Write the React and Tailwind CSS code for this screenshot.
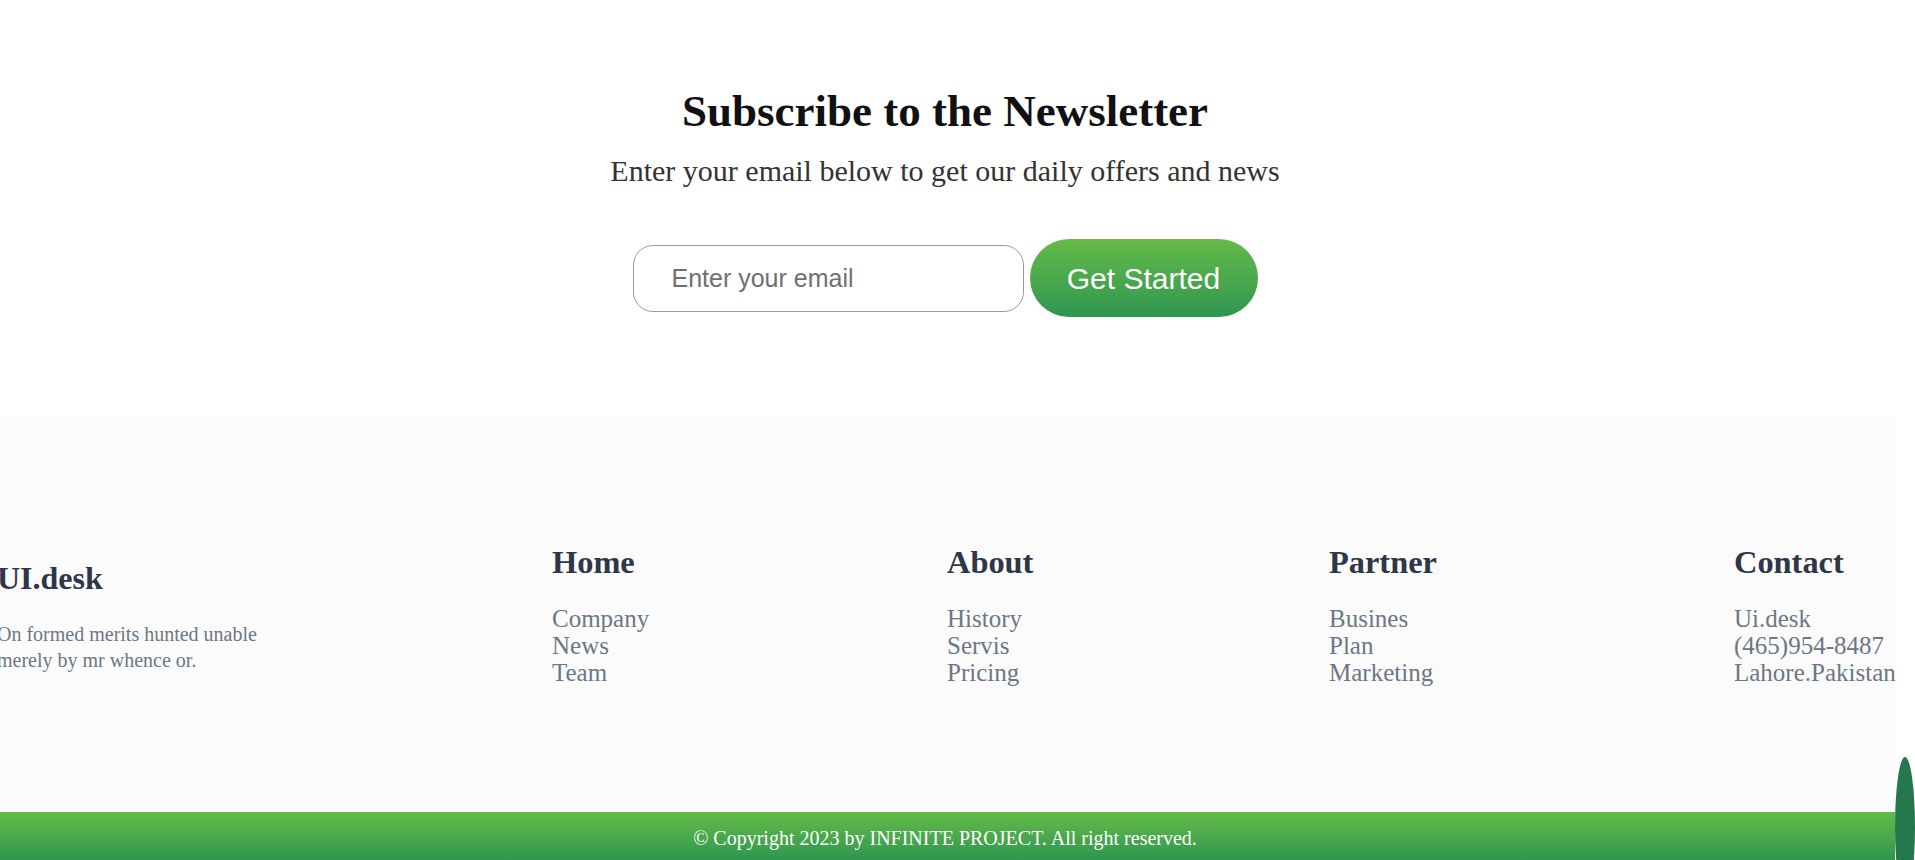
import React from 'react';

const COLUMNS = [
  { title: 'Home', links: ['Company', 'News', 'Team'], w: 'w-[395px]' },
  { title: 'About', links: ['History', 'Servis', 'Pricing'], w: 'w-[382px]' },
  { title: 'Partner', links: ['Busines', 'Plan', 'Marketing'], w: 'w-[405px]' },
  { title: 'Contact', links: ['Ui.desk', '(465)954-8487', 'Lahore.Pakistan'], w: 'w-[161px]' },
];

const serif = "font-['Liberation_Serif','Times_New_Roman',serif]";

const App = () => {
  return (
    <div className={`relative w-[1895px] bg-white ${serif}`}>
      {/* Newsletter */}
      <section className="h-[416px] flex flex-col items-center pt-[85px] pr-[5px]">
        <h2 className="text-[45px] leading-[52px] font-bold text-[#111]">Subscribe to the Newsletter</h2>
        <p className="mt-[16px] text-[30px] leading-[36px] text-[#333]">
          Enter your email below to get our daily offers and news
        </p>
        <form className="mt-[50px] flex items-center gap-[6px]" onSubmit={(e) => e.preventDefault()}>
          <input
            type="email"
            placeholder="Enter your email"
            className="w-[391px] h-[67px] rounded-[20px] border border-[#9a9a9a] pl-[38px] text-[25px] outline-none font-['Liberation_Sans',Arial,sans-serif] placeholder:text-[#6f6f6f]"
          />
          <button
            type="submit"
            className="w-[228px] h-[78px] rounded-full bg-gradient-to-b from-[#64bb47] to-[#2e9650] text-white text-[30px] font-['Liberation_Sans',Arial,sans-serif]"
          >
            Get Started
          </button>
        </form>
      </section>

      {/* Footer */}
      <footer className="bg-[#fbfbfb]">
        <div className="h-[396px] flex pt-[127px]">
          <div className="w-[552px] shrink-0 -ml-[3px] pt-[16px]">
            <h3 className="text-[32px] leading-[38px] font-bold text-[#2d3748]">UI.desk</h3>
            <p className="mt-[24px] w-[275px] text-[20px] leading-[26px] text-[#6b7785]">
              On formed merits hunted unable merely by mr whence or.
            </p>
          </div>
          <div className="w-[3px] shrink-0" />
          {COLUMNS.map((col) => (
            <div key={col.title} className={`${col.w} shrink-0`}>
              <h4 className="text-[32.4px] leading-[38px] font-bold text-[#2d3748]">{col.title}</h4>
              <ul className="mt-[24px] text-[25px] leading-[27px] text-[#6b7785] whitespace-nowrap">
                {col.links.map((l) => (
                  <li key={l}>{l}</li>
                ))}
              </ul>
            </div>
          ))}
        </div>
        <div className="h-[48px] bg-gradient-to-b from-[#64bb47] to-[#2e9650] flex justify-center pt-[14px] pr-[5px]">
          <p className="text-[20px] leading-[24px] text-white">
            © Copyright 2023 by INFINITE PROJECT. All right reserved.
          </p>
        </div>
      </footer>

      {/* scroll-to-top blob */}
      <div className="fixed left-[1895px] top-[757px] w-[20px] h-[140px] rounded-[50%] bg-[#25784b]" />
    </div>
  );
};

export default App;
